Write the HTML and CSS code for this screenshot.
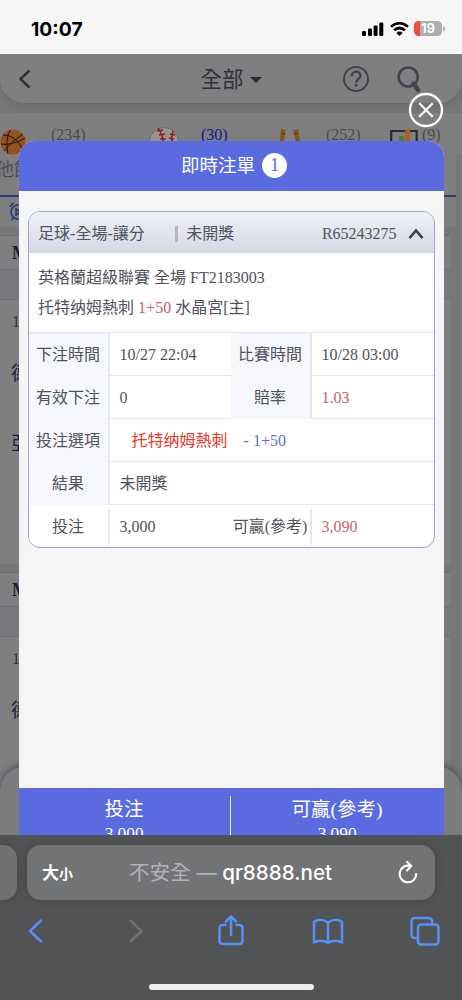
FILE: index.html
```html
<!DOCTYPE html>
<html lang="zh-Hant">
<head>
<meta charset="utf-8">
<title>即時注單</title>
<link rel="stylesheet" href="styles.css">
</head>
<body>
<div class="phone">
  <header class="status">
    <span class="clock">10:07</span>
    <div class="signals">
      <svg width="22" height="14" viewBox="0 0 22 14"><rect x="0" y="9" width="4" height="5" rx="1.2"/><rect x="6" y="6.5" width="4" height="7.5" rx="1.2"/><rect x="11.6" y="3.5" width="4" height="10.500" rx="1.2"/><rect x="17.300" y="0.500" width="4" height="13.500" rx="1.2"/></svg>
      <svg width="19" height="14" viewBox="0 0 19 14" fill="none" stroke="#000" stroke-width="2.700"><path d="M1 4.800Q9.500-2.400 18 4.800"/><path d="M4 8.300Q9.500 3.700 15 8.300"/><path d="M6.400 11Q9.500 8.200 12.600 11L9.500 14z" fill="#000" stroke="none"/></svg>
      <div class="battery"><span class="level">19</span><i class="nub"></i></div>
    </div>
  </header>

  <main class="viewport">
    <div class="page">
      <nav class="navbar">
        <svg width="14" height="20" viewBox="0 0 14 20" fill="none" stroke="#2d303a" stroke-width="2.500"><path d="M11.500 1.500L2.500 10l9 8.500"/></svg>
        <div class="nav-title">全部<i class="caret"></i></div>
        <div class="nav-icons">
          <svg width="28" height="28" viewBox="0 0 28 28" fill="none" stroke="#40444f" stroke-width="2"><circle cx="14" cy="14" r="12"/><path d="M9.700 11.200C9.700 5.300 18.400 5.300 18.400 10.700c0 3.300-4.200 3.300-4.200 7" stroke-width="2.300"/><circle cx="14.200" cy="20.300" r="1.500" fill="#40444f" stroke="none"/></svg>
          <svg width="26" height="28" viewBox="0 0 26 28" fill="none" stroke="#40444f"><circle cx="12.200" cy="12" r="9.500" stroke-width="2.600"/><path d="M17.500 18.500L22 25" stroke-width="4.500" stroke-linecap="round"/></svg>
        </div>
      </nav>
      <section class="sports">
        <div class="sport sport-basket"><svg width="26" height="26" viewBox="0 0 26 26" fill="none" stroke="#20150f"><circle cx="13" cy="13" r="12.500" fill="#965022" stroke="none"/><path d="M3 6Q15 5 23 21M1 15Q12 17 25 9M10 1Q5 12 8 25M4 22Q12 12 23 5"/></svg><span>(234)</span></div>
        <div class="sport sport-base"><svg width="30" height="30" viewBox="0 0 30 30" fill="none"><circle cx="15" cy="15" r="14.500" fill="#989492" stroke="#6e6b6a"/><path d="M9 1Q15 8 14 20M24 4Q21 12 25 22" stroke="#8c1d20" stroke-width="1.500"/><path d="M8 4l6-1M10 8l6-1M11 12h6M21 7l5 1M20 11l5 1" stroke="#8c1d20" stroke-width="1.300"/></svg><span class="active">(30)</span></div>
        <div class="sport sport-boxing"><svg width="22" height="18" viewBox="0 0 22 18"><path d="M2 0l5 1-3 16H0zM14 1l5-1 3 17h-4z" fill="#80591c"/><path d="M2 4l4 1M15 5l4-1" stroke="#4b3014"/></svg><span>(252)</span></div>
        <div class="sport sport-court"><svg width="28" height="18" viewBox="0 0 28 18"><path d="M1.200 18V2h25.500v16" fill="none" stroke="#252c35" stroke-width="2.200"/><path d="M9 7h5v11H9z" fill="#507c38"/><path d="M15 0h5v18h-5z" fill="#a16322"/></svg><span>(9)</span></div>
      </section>
      <div class="sport-name">他飾</div>
      <div class="filter"><svg width="22" height="20" viewBox="0 0 22 20" fill="none" stroke="#2c3774" stroke-width="1.600"><circle cx="9" cy="10" r="7"/><path d="M1 4.500L4.500 1M2.500 18l2-2M7 7l5 3-5 3z"/></svg></div>
      <section class="league">
        <h3>M</h3><div class="band"></div>
        <p class="time">1</p><p class="team">德</p><p class="team">亞</p>
      </section>
      <section class="league">
        <h3>M</h3><div class="band"></div>
        <p class="time">1</p><p class="team">德</p>
      </section>
      <div class="sheet"></div>
    </div>

    <svg class="close" width="36" height="36" viewBox="0 0 36 36" fill="none" stroke="#fff" stroke-width="2.300"><circle cx="18" cy="18" r="16"/><path d="M11.300 11.300l13.400 13.400M24.700 11.300L11.300 24.700"/></svg>

    <section class="modal">
      <h1 class="modal-head">即時注單<span class="count">1</span></h1>
      <div class="modal-body">
        <article class="ticket">
          <header class="ticket-head">
            <span class="kind">足球-全場-讓分</span><i class="bar"></i><span>未開獎</span>
            <span class="number">R65243275</span>
            <svg width="16" height="12" viewBox="0 0 16 12" fill="none" stroke="#3e414c" stroke-width="2.600"><path d="M1.500 10.200L8 2.500l6.500 7.700"/></svg>
          </header>
          <div class="match"><p>英格蘭超級聯賽 全場 FT2183003</p><p>托特纳姆熱刺 <em>1+50</em> 水晶宮[主]</p></div>
          <div class="row"><b>下注時間</b><span>10/27 22:04</span><b>比賽時間</b><span>10/28 03:00</span></div>
          <div class="row"><b>有效下注</b><span>0</span><b>賠率</b><span class="rose">1.03</span></div>
          <div class="row wide"><b>投注選項</b><span class="pick"><strong>托特纳姆熱刺</strong><i>- 1+50</i></span></div>
          <div class="row wide"><b>結果</b><span>未開獎</span></div>
          <div class="row total"><b>投注</b><span>3,000</span><b>可贏(參考)</b><span class="rose">3,090</span></div>
        </article>
      </div>
      <footer class="modal-foot">
        <div>投注<small>3,000</small></div>
        <i class="split"></i>
        <div>可贏(參考)<small>3,090</small></div>
      </footer>
    </section>
  </main>

  <footer class="browser">
    <div class="tabs">
      <div class="prev-tab"></div>
      <div class="address">
        <span class="size">大<small>小</small></span>
        <span class="url"><span class="warn">不安全 —</span> qr8888.net</span>
        <svg width="22" height="26" viewBox="0 0 22 26" fill="none" stroke="#fff" stroke-width="2.100" stroke-linecap="round" stroke-linejoin="round"><path d="M13.500 6.100A8.300 8.300 0 1 0 19.200 14M10 1.800l4.300 4.300-4.300 4.300"/></svg>
      </div>
    </div>
    <nav class="tools">
      <svg width="32" height="32" viewBox="0 0 32 32"><path d="M21 5.500L10 16l11 10.500"/></svg>
      <svg class="off" width="32" height="32" viewBox="0 0 32 32"><path d="M13.500 5.500l11 10.500-11 10.500"/></svg>
      <svg width="32" height="32" viewBox="0 0 32 32"><path d="M10.500 10H7.500a3 3 0 0 0-3 3V26a3 3 0 0 0 3 3h17a3 3 0 0 0 3-3V13a3 3 0 0 0-3-3H21.500M16 20V1.500M11 6.500L16 1.500l5 5"/></svg>
      <svg width="32" height="32" viewBox="0 0 32 32"><path d="M16 8C12.500 4 5 4 2 7v20.500c4-2.500 10.500-2.500 14 .5 3.500-3 10-3 14-.5V7c-3-3-10.500-3-14 1zV28"/></svg>
      <svg width="32" height="32" viewBox="0 0 32 32"><rect x="9" y="9.500" width="20.500" height="20" rx="3"/><path d="M9 23H5.500a3 3 0 0 1-3-3V6a3 3 0 0 1 3-3h14.500a3 3 0 0 1 3 3V9.500"/></svg>
    </nav>
    <div class="home"></div>
  </footer>
</div>
</body>
</html>
```
FILE: styles.css
```css
* { box-sizing: border-box; }
body { margin: 0; }
h1, h3, p { margin: 0; font-weight: 400; }
b, i, em { font-weight: 400; font-style: normal; }
svg { display: block; flex: none; }

.phone {
  width: 462px; height: 1000px; overflow: hidden;
  display: flex; flex-direction: column;
  font: 16px/24px "Liberation Serif", "Noto Sans CJK TC", serif;
  color: #50525d;
}

.status {
  height: 54px; flex: none; background: #f6f6f6;
  display: flex; justify-content: space-between; align-items: center;
  padding: 3px 17px 0 31px;
}
.clock { font: 700 19.300px/24px Inter, sans-serif; color: #000; }
.signals { display: flex; align-items: center; gap: 5.500px; }
.battery { display: flex; align-items: center; gap: 1px; }
.level {
  width: 28px; height: 15px; border-radius: 4.5px; text-align: center;
  background: linear-gradient(90deg, #eb4e3d 6px, #adadad 6px);
  color: #fff; font: 700 13px/15px Inter, sans-serif;
}
.nub { width: 2px; height: 5px; border-radius: 0 2px 2px 0; background: #adadad; }

.viewport { position: relative; height: 781px; flex: none; overflow: hidden; }
.page { height: 781px; overflow: hidden; display: flex; flex-direction: column; background: #777; }
.navbar {
  height: 49px; flex: none; border-radius: 0 0 24px 24px; background: #7f7f7f;
  box-shadow: 0 3px 9px #6b6b6b; display: grid; grid-template-columns: 1fr auto 1fr;
  align-items: center; padding: 0 40px 0 18px;
}
.nav-title { display: flex; align-items: center; gap: 6px; font-size: 21.5px; color: #2d303a; margin-left: 22px; padding-top: 3px; }
.caret { border: 6px solid transparent; border-top-color: #252832; border-bottom: 0; }
.nav-icons { display: flex; justify-content: flex-end; gap: 26px; }

.sports { height: 42px; flex: none; margin-top: 10px; background: #7f7f7f; display: flex; padding-top: 12px; color: #484a54; }
.sport { display: flex; align-items: flex-start; flex: none; line-height: 20px; }
.sport svg { margin-top: 4px; }
.sport-basket { width: 149px; gap: 25px; }
.sport-base { width: 130px; gap: 22px; }
.sport-base svg { margin-top: 2px; }
.sport-boxing { width: 111px; gap: 25px; }
.sport-court { gap: 4px; }
.active { color: #11168a; }
.sport-name { height: 42px; flex: none; width: 456px; background: #7f7f7f; border-bottom: 2px solid #2f3a78; font-size: 18px; line-height: 30px; text-indent: -4px; color: #4a4c55; white-space: nowrap; }
.filter { height: 30px; flex: none; width: 456px; background: #7f7f7f; padding: 5px 9px; }
.league { width: 450px; flex: none; height: 329px; margin-top: 8px; border-top: 1px solid #696b7d; background: #7f7f7f; color: #1b1d3e; }
.league h3 { height: 33px; padding-left: 12px; font-weight: 700; font-size: 18px; line-height: 35px; }
.band { height: 31px; background: #77797f; border: solid #6c6e7d; border-width: 1px 0; }
.time { margin: 10px 0 0 12px; color: #333; }
.team { margin: 28px 0 46px 11px; font-size: 19px; }
.sheet {
  position: absolute; left: 0; top: 712px; width: 462px; height: 90px;
  border-radius: 26px 26px 0 0; background: #7c7c7c; box-shadow: 0 -2px 7px #4b4d60;
}

.close { position: absolute; left: 408px; top: 38px; }

.modal {
  position: absolute; left: 18.600px; top: 86.600px; width: 425px; height: 695px; overflow: hidden;
  border-radius: 16px 16px 0 0; background: #f5f5f5; display: flex; flex-direction: column;
}
.modal-head {
  height: 50px; flex: none; background: #5a6bdf; color: #fff; font-size: 18.5px;
  display: flex; justify-content: center; align-items: center; gap: 7px; padding-left: 6px;
}
.count { width: 25px; height: 25px; border-radius: 50%; background: #fff; color: #5a6bdf; text-align: center; line-height: 25px; }
.modal-body { flex: 1; padding: 20px 9px 0; }
.ticket { height: 337px; border: 1.500px solid #9da4d0; border-radius: 12px; overflow: hidden; background: #fff; }
.ticket-head { height: 41px; display: flex; align-items: center; padding: 3px 10px 0 9.500px; background: linear-gradient(#f0f1f6, #d5d7e4); }
.bar { width: 3px; height: 16px; background: #b5b6c2; margin: 0 8px 0 30.500px; }
.number { margin-left: auto; margin-right: 11px; }
.match { height: 79px; padding: 10px 9.500px 0; line-height: 30px; }
.match em, .rose { color: #c9606b; }
.row { height: 43px; border-top: 1.500px solid #e1e4f3; display: grid; grid-template-columns: 81px 121px 81px 1fr; line-height: 43px; white-space: nowrap; }
.row.wide { grid-template-columns: 81px 1fr; }
.row b { background: #f6f7fc; border-right: 2px solid #e4e6f4; text-align: center; }
.row span { padding-left: 10px; }
.row .pick { display: flex; gap: 16px; padding-left: 22px; color: #5a6bdf; }
.pick strong { color: #ea3628; font-weight: 400; }
.total { line-height: 36px; padding: 4px 0; }
.total b { background: #fff; }

.modal-foot { height: 48px; flex: none; background: #5a6bdf; color: #fff; display: grid; grid-template-columns: 211px 1px 1fr; font-size: 19.500px; line-height: 27px; text-align: center; padding-top: 8px; }
.modal-foot small { display: block; font-size: 17.300px; line-height: 21px; }
.split { background: #e8eafa; }

.browser { height: 165px; flex: none; background: #525355; display: flex; flex-direction: column; }
.tabs { display: flex; gap: 10px; padding-top: 10px; }
.prev-tab { width: 17px; height: 55px; border-radius: 0 14px 14px 0; background: #707173; box-shadow: 0 0 10px #444; }
.address {
  width: 408px; height: 55px; border-radius: 14px; background: #727375; box-shadow: 0 0 10px #444;
  display: flex; align-items: center; justify-content: space-between; padding: 0 16px 0 15px; color: #fff;
}
.size { font: 700 17px/24px "Noto Sans CJK TC", sans-serif; }
.size small { font-size: 14px; }
.url { font: 500 20.600px/28px Inter, "Noto Sans CJK TC", sans-serif; white-space: nowrap; margin-left: -9px; }
.warn { color: #b1b1b7; font-weight: 400; letter-spacing: -0.1px; }
.tools { display: flex; justify-content: space-between; align-items: center; padding: 15px 21px 0 20px; fill: none; stroke: #5790f6; stroke-width: 2.500; stroke-linecap: round; stroke-linejoin: round; }
.tools .off { stroke: #707173; }
.home { width: 165px; height: 6px; border-radius: 3px; background: #f0f0f0; margin: 37px 0 0 149px; }
```
